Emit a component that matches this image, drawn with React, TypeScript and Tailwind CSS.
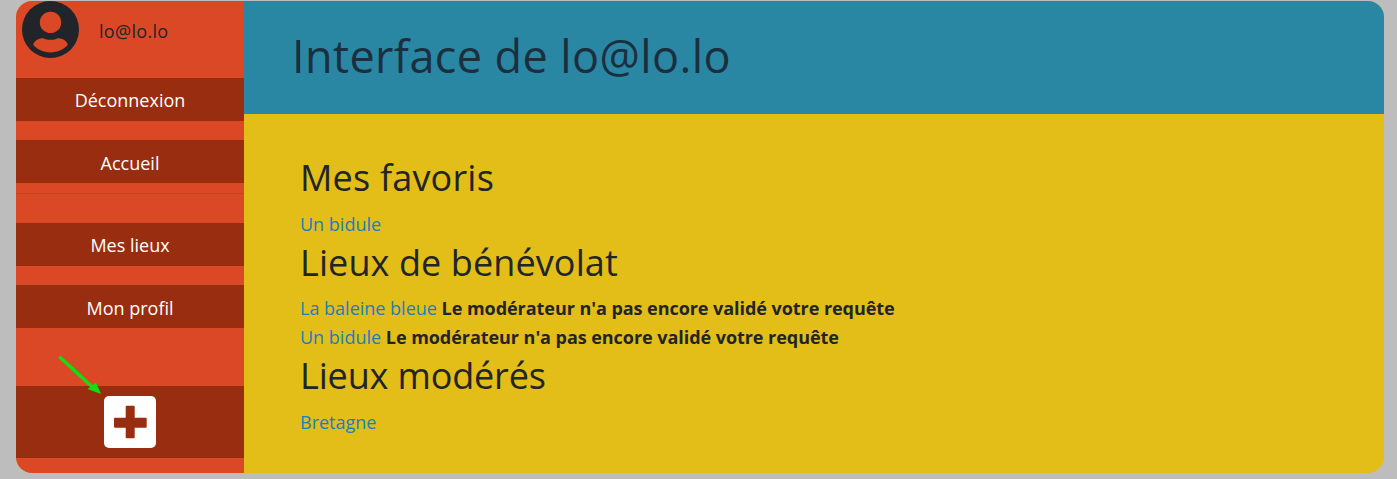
function NavItem({ label, className }: { label: string; className: string }) {
  return (
    <a className={`flex h-[43px] items-center justify-center bg-[#992d0f] text-[18px] text-white ${className}`}>
      {label}
    </a>
  );
}

export default function App() {
  return (
    <div className="h-[479px] w-[1397px] overflow-hidden bg-[#bdbdbd] pt-px pl-4 font-['Open_Sans','Noto_Sans',sans-serif]">
      <div className="flex h-[472px] w-[1368px] overflow-hidden rounded-[16px] bg-[#e3bd18]">
        <aside className="flex w-[228px] shrink-0 flex-col bg-[#db4826]">
          <div className="flex h-[77px] items-start pl-[6px]">
            <svg viewBox="0 0 56 56" className="h-[57px] w-[57px] shrink-0">
              <circle cx="28" cy="28" r="28" fill="#212529" />
              <circle cx="28" cy="21" r="10.5" fill="#db4826" />
              <path d="M11 43C12 39 16 36.5 21 36.5C25 38.5 31 38.5 35 36.5C40 36.5 44 39 45 43C41 47.5 35 50.5 28 50.5C21 50.5 15 47.5 11 43Z" fill="#db4826" />
            </svg>
            <span className="ml-[20px] mt-[17px] text-[18px] leading-[27px] tracking-[0.3px] text-[#212529]">lo@lo.lo</span>
          </div>
          <NavItem label="Déconnexion" className="pt-[2px]" />
          <NavItem label="Accueil" className="mt-[19px] pt-[4px]" />
          <hr className="mt-[10px] border-t border-[#c9421f]" />
          <NavItem label="Mes lieux" className="mt-[29px] pt-[2px]" />
          <NavItem label="Mon profil" className="mt-[19px] pt-[4px]" />
          <div className="relative mt-[58px] flex h-[72px] items-center justify-center bg-[#992d0f]">
            <svg viewBox="0 0 52 52" className="h-[52px] w-[52px]">
              <rect width="52" height="52" rx="5" fill="#fff" />
              <rect x="21.7" y="9.7" width="9" height="32.6" rx="1" fill="#992d0f" />
              <rect x="10" y="21.7" width="32.7" height="10" rx="1" fill="#992d0f" />
            </svg>
            <svg viewBox="0 0 44 40" className="absolute left-[42px] top-[-30px] h-[40px] w-[44px]">
              <path d="M1.3 .7 L35 31.5" stroke="#0fe00f" strokeWidth="3.5" />
              <path d="M43 38 L29.5 33 L38 26.5 Z" fill="#0fe00f" />
            </svg>
          </div>
        </aside>
        <main className="flex min-w-0 flex-1 flex-col">
          <header className="flex h-[113px] items-center bg-[#2a87a4] pb-[4px] pl-[48px]">
            <h1 className="text-[45px] leading-[1.2] tracking-[0.4px] text-[#1c2f3f]">Interface de lo@lo.lo</h1>
          </header>
          <section className="pl-[56px] pt-[40px] text-[18px] text-[#212529]">
            <h2 className="mb-[8px] text-[36px] leading-[48px] tracking-[0.2px]">Mes favoris</h2>
            <a className="block h-[29px] leading-[29px] text-[#1a7fbf]">Un bidule</a>
            <h2 className="mb-[8px] text-[36px] leading-[48px] tracking-[0.1px]">Lieux de bénévolat</h2>
            <div className="h-[29px] leading-[27px]"><a className="text-[#1a7fbf]">La baleine bleue</a> <b className="font-bold tracking-[-0.05px]">Le modérateur n'a pas encore validé votre requête</b></div>
            <div className="h-[28px] leading-[27px]"><a className="text-[#1a7fbf]">Un bidule</a> <b className="font-bold tracking-[-0.05px]">Le modérateur n'a pas encore validé votre requête</b></div>
            <h2 className="mb-[9px] text-[36px] leading-[48px] tracking-[-0.15px]">Lieux modérés</h2>
            <a className="block leading-[27px] text-[#1a7fbf]">Bretagne</a>
          </section>
        </main>
      </div>
    </div>
  );
}
